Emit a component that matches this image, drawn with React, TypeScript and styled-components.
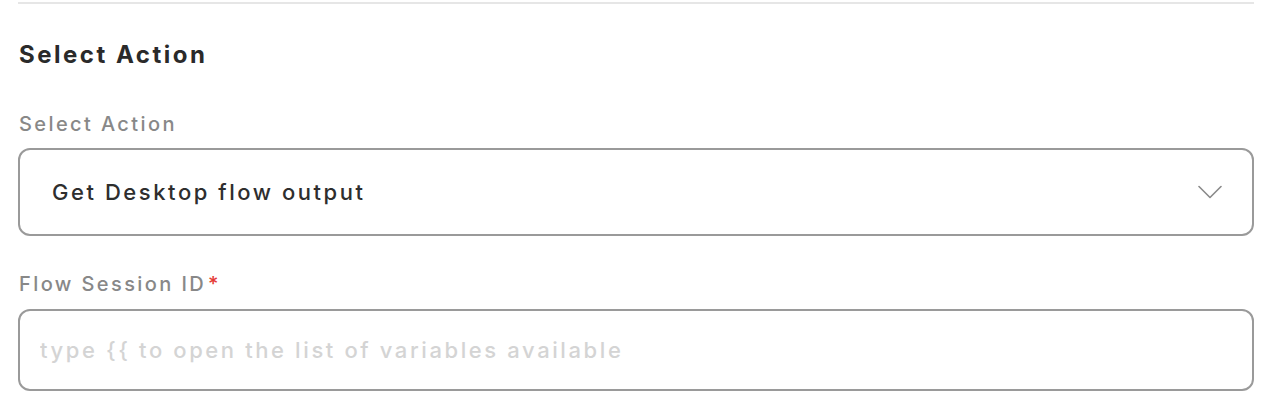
import React from "react";
import styled, { createGlobalStyle } from "styled-components";

const Global = createGlobalStyle`
  html, body { margin: 0; padding: 0; background: #ffffff; }
  body { font-family: Inter, "Open Sans", sans-serif; }
  * { box-sizing: border-box; }
`;

const Panel = styled.div`
  width: 1272px;
  padding: 2px 18px 0 18px;
  display: flex;
  flex-direction: column;
`;

const Divider = styled.div`
  height: 2px;
  background: #e6e6e6;
`;

const Heading = styled.h2`
  margin: 35px 0 0 1px;
  font-size: 24px;
  line-height: 32px;
  font-weight: 700;
  letter-spacing: 2.5px;
  color: #2a2a2a;
`;

const Field = styled.div<{ $top: number }>`
  display: flex;
  flex-direction: column;
  margin-top: ${(p) => p.$top}px;
`;

const Label = styled.label<{ $gap: number }>`
  font-size: 20px;
  line-height: 28px;
  font-weight: 500;
  letter-spacing: 2.4px;
  color: #888888;
  margin: 0 0 ${(p) => p.$gap}px 1px;
`;

const Required = styled.span`
  color: #e53935;
  margin-left: 2px;
`;

const SelectBox = styled.div`
  height: 88px;
  border: 2px solid #9a9a9a;
  border-radius: 12px;
  display: flex;
  align-items: center;
  justify-content: space-between;
  padding: 0 30px 0 32px;
`;

const SelectValue = styled.span`
  font-size: 22px;
  font-weight: 500;
  letter-spacing: 2.55px;
  color: #2e2e2e;
`;

const TextInput = styled.input`
  height: 82px;
  border: 2px solid #9a9a9a;
  border-radius: 12px;
  padding: 0 20px;
  font-family: inherit;
  font-size: 22px;
  font-weight: 500;
  letter-spacing: 2.6px;
  color: #2e2e2e;
  outline: none;
  &::placeholder {
    color: #d4d4d4;
  }
`;

const Chevron = () => (
  <svg width="24" height="14" viewBox="0 0 24 14" fill="none">
    <path d="M1 1.5L12 12.5L23 1.5" stroke="#8a8a8a" strokeWidth="1.6" strokeLinecap="round" strokeLinejoin="round" />
  </svg>
);

export default function App() {
  return (
    <>
      <Global />
      <Panel>
        <Divider />
        <Heading>Select Action</Heading>
        <Field $top={39}>
          <Label $gap={10}>Select Action</Label>
          <SelectBox>
            <SelectValue>Get Desktop flow output</SelectValue>
            <Chevron />
          </SelectBox>
        </Field>
        <Field $top={34}>
          <Label $gap={11}>
            Flow Session ID<Required>*</Required>
          </Label>
          <TextInput placeholder="type {{ to open the list of variables available" />
        </Field>
      </Panel>
    </>
  );
}
